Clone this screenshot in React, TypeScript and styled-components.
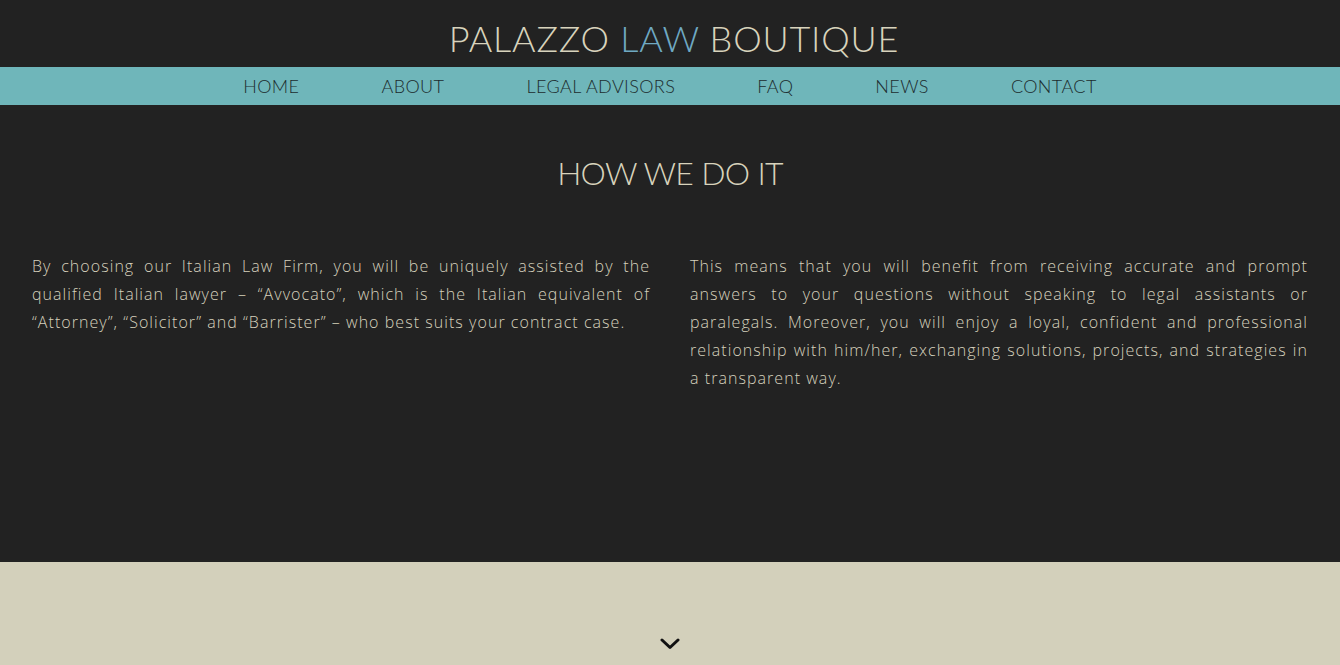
import React from "react";
import styled, { createGlobalStyle } from "styled-components";

const Global = createGlobalStyle`
  html, body { margin: 0; padding: 0; background: #222222; }
  * { box-sizing: border-box; }
`;

const Page = styled.div`
  width: 1340px;
  min-height: 665px;
  background: #222222;
  display: flex;
  flex-direction: column;
`;

const Header = styled.header`
  height: 67px;
  display: flex;
  align-items: center;
  justify-content: center;
  padding: 9px 0 0 8px;
`;

const Logo = styled.h1`
  margin: 0;
  font-family: "Lato", "Inter", sans-serif;
  font-weight: 300;
  font-size: 36px;
  letter-spacing: 0.8px;
  color: #d8d3bc;
  line-height: 1;
`;

const Accent = styled.span`
  color: #6fa9c2;
`;

const Nav = styled.nav`
  height: 38px;
  background: #6fb6ba;
  display: flex;
  align-items: center;
  justify-content: center;
  gap: 82px;
`;

const NavItem = styled.a`
  font-family: "Lato", "Inter", sans-serif;
  font-weight: 300;
  font-size: 18px;
  letter-spacing: 0.4px;
  color: #1c2c2e;
  text-decoration: none;
  line-height: 1;
`;

const Main = styled.section`
  height: 457px;
  padding: 52px 32px 0;
  display: flex;
  flex-direction: column;
`;

const Title = styled.h2`
  margin: 0;
  text-align: center;
  font-family: "Lato", "Inter", sans-serif;
  font-weight: 300;
  font-size: 32px;
  letter-spacing: -0.7px;
  color: #d8d3bc;
  line-height: 1;
`;

const Columns = styled.div`
  margin-top: 63px;
  display: grid;
  grid-template-columns: 1fr 1fr;
  gap: 40px;
`;

const Para = styled.p`
  margin: 0;
  font-family: "Open Sans", sans-serif;
  font-weight: 300;
  font-size: 16px;
  line-height: 28px;
  letter-spacing: 1.05px;
  text-align: justify;
  color: #d6d1bd;
`;

const Footer = styled.div`
  flex: 1;
  background: #d3d0bb;
  display: flex;
  justify-content: center;
  align-items: flex-end;
  padding-bottom: 15px;
  min-height: 103px;
`;

const Chevron = () => (
  <svg width="20" height="12" viewBox="0 0 20 12" fill="none">
    <path d="M2 2 L10 9.5 L18 2" stroke="#111" strokeWidth="3" strokeLinecap="round" strokeLinejoin="round" />
  </svg>
);

export default function App() {
  return (
    <Page>
      <Global />
      <Header>
        <Logo>
          PALAZZO <Accent>LAW</Accent> BOUTIQUE
        </Logo>
      </Header>
      <Nav>
        <NavItem>HOME</NavItem>
        <NavItem>ABOUT</NavItem>
        <NavItem>LEGAL ADVISORS</NavItem>
        <NavItem>FAQ</NavItem>
        <NavItem>NEWS</NavItem>
        <NavItem>CONTACT</NavItem>
      </Nav>
      <Main>
        <Title>HOW WE DO IT</Title>
        <Columns>
          <Para>
            By choosing our Italian Law Firm, you will be uniquely assisted by the qualified Italian lawyer – “Avvocato”, which is the Italian equivalent of “Attorney”, “Solicitor” and “Barrister” – who best suits your contract case.
          </Para>
          <Para>
            This means that you will benefit from receiving accurate and prompt answers to your questions without speaking to legal assistants or paralegals. Moreover, you will enjoy a loyal, confident and professional relationship with him/her, exchanging solutions, projects, and strategies in a transparent way.
          </Para>
        </Columns>
      </Main>
      <Footer>
        <Chevron />
      </Footer>
    </Page>
  );
}
